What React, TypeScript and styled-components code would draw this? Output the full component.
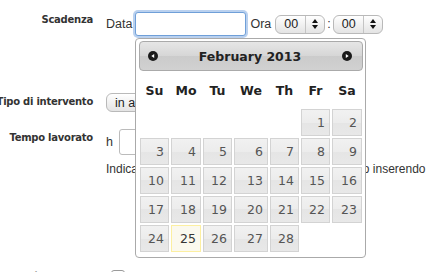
import React from "react"
import styled, { createGlobalStyle } from "styled-components"

const GlobalStyle = createGlobalStyle`
    html, body {
        margin: 0;
        padding: 0;
        background: #fff;
        overflow: hidden;
    }
    body {
        font-family: "Liberation Sans", Arial, sans-serif;
        font-size: 12.5px;
        color: #333;
    }
`

const Page = styled.div`
    position: relative;
    width: 432px;
    height: 272px;
    overflow: hidden;
`

const Form = styled.div`
    display: flex;
    flex-direction: column;
    padding-top: 12px;
`

const Row = styled.div`
    display: grid;
    grid-template-columns: 93px 1fr;
    column-gap: 13px;
    margin-top: ${(props: { $gap: number }) => props.$gap}px;
`

const Label = styled.div`
    display: flex;
    justify-content: flex-end;
    white-space: nowrap;
    font-family: "DejaVu Sans", Verdana, sans-serif;
    font-weight: bold;
    font-size: 10px;
    letter-spacing: -0.25px;
    color: #333;
    padding-top: ${(props: { $top: number }) => props.$top}px;
`

const Field = styled.div`
    display: flex;
    align-items: center;
    gap: 4px;
    white-space: nowrap;
`

const Stack = styled.div`
    display: flex;
    flex-direction: column;
    gap: 7px;
`

const DateInput = styled.div`
    width: 111px;
    height: 24px;
    box-sizing: border-box;
    border: 1px solid #6f9fd8;
    border-radius: 3px;
    background: #fff;
    box-shadow: 0 0 0 2px rgba(130, 172, 226, 0.55);
    margin-left: -1px;
`

const Spinner = styled.div`
    display: flex;
    align-items: center;
    width: ${(props: { $width: number }) => props.$width}px;
    height: 19px;
    box-sizing: border-box;
    border: 1px solid #b9b9b9;
    border-radius: 6px;
    background: linear-gradient(#ffffff, #f1f1f1 50%, #e4e4e4);
    color: #222;
    font-size: 12.5px;
`

const SpinnerValue = styled.span`
    flex: 1;
    padding-left: 8px;
`

const SpinnerArrows = styled.span`
    display: flex;
    align-items: center;
    justify-content: center;
    width: 18px;
    height: 100%;
    border-left: 1px solid #c4c4c4;
`

const Colon = styled.span`
    margin: 0 -2px;
`

const SmallInput = styled.div`
    width: 60px;
    height: 26px;
    box-sizing: border-box;
    border: 1px solid #bbb;
    border-radius: 3px;
    background: #fff;
    margin-left: 2px;
`

const Hint = styled.div`
    font-size: 12px;
    white-space: nowrap;
`

const Checkbox = styled.div`
    width: 14px;
    height: 14px;
    box-sizing: border-box;
    border: 1px solid #9a9a9a;
    border-radius: 3px;
    background: linear-gradient(#fff, #ededed);
    margin-left: 5px;
    margin-top: 1px;
`

const Picker = styled.div`
    position: absolute;
    left: 135px;
    top: 38px;
    width: 231px;
    height: 220px;
    box-sizing: border-box;
    padding: 2px 2px 5px 3px;
    border: 1px solid #aaa;
    border-radius: 4px;
    background: #fff;
    z-index: 10;
    font-family: "DejaVu Sans", Verdana, sans-serif;
`

const PickerHeader = styled.div`
    display: flex;
    align-items: center;
    justify-content: space-between;
    height: 30px;
    box-sizing: border-box;
    padding: 0 10px 0 8px;
    border: 1px solid #aaa;
    border-radius: 4px;
    background: linear-gradient(#e6e6e6, #d6d6d6 50%, #cbcbcb 50%, #d1d1d1);
`

const Title = styled.div`
    font-weight: bold;
    font-size: 12.5px;
    color: #222;
`

const NavIcon = styled.svg`
    width: 10px;
    height: 10px;
    display: block;
`

const DayGrid = styled.div`
    display: grid;
    grid-template-columns: 29px 30px 29px 34px 29px 29px 30px;
    column-gap: 2px;
    row-gap: 2px;
    margin-left: 1px;
`

const DayNames = styled(DayGrid)`
    height: 38px;
    align-items: center;
`

const DayName = styled.div`
    text-align: center;
    font-weight: bold;
    font-size: 12.5px;
    color: #222;
`

const Days = styled(DayGrid)`
    grid-auto-rows: 27px;
`

const Day = styled.div`
    display: flex;
    align-items: center;
    justify-content: flex-end;
    padding-right: 4px;
    box-sizing: border-box;
    font-size: 12.5px;
    border: 1px solid ${(props: { $today?: boolean }) => (props.$today ? "#fcefa1" : "#d3d3d3")};
    background: ${(props: { $today?: boolean }) =>
        props.$today ? "#fbf9ee" : "linear-gradient(#f1f1f1, #ececec 50%, #e5e5e5 50%, #e8e8e8)"};
    color: ${(props: { $today?: boolean }) => (props.$today ? "#363636" : "#555")};
`

const Blank = styled.div``

function UpDown() {
    return (
        <svg width="6" height="10" viewBox="0 0 6 10">
            <path d="M3 0 L6 4 L0 4 Z M0 6 L6 6 L3 10 Z" fill="#111" />
        </svg>
    )
}

function Nav(props: { dir: "prev" | "next" }) {
    return (
        <NavIcon viewBox="0 0 10 10">
            <circle cx="5" cy="5" r="5" fill="#1a1a1a" />
            {props.dir === "prev" ? (
                <path d="M3.3 5 L6.2 2.9 L6.2 7.1 Z" fill="#fff" />
            ) : (
                <path d="M6.7 5 L3.8 2.9 L3.8 7.1 Z" fill="#fff" />
            )}
        </NavIcon>
    )
}

const dayNames = ["Su", "Mo", "Tu", "We", "Th", "Fr", "Sa"]

export default function App() {
    const cells: React.ReactNode[] = []
    for (let i = 0; i < 5; i++) cells.push(<Blank key={"b" + i} />)
    for (let d = 1; d <= 28; d++) {
        cells.push(
            <Day key={d} $today={d === 25}>
                {d}
            </Day>
        )
    }

    return (
        <Page>
            <GlobalStyle />
            <Form>
                <Row $gap={0}>
                    <Label $top={2}>Scadenza</Label>
                    <Field>
                        <span>Data</span>
                        <DateInput />
                        <span>Ora</span>
                        <Spinner $width={50}>
                            <SpinnerValue>00</SpinnerValue>
                            <SpinnerArrows><UpDown /></SpinnerArrows>
                        </Spinner>
                        <Colon>:</Colon>
                        <Spinner $width={50}>
                            <SpinnerValue>00</SpinnerValue>
                            <SpinnerArrows><UpDown /></SpinnerArrows>
                        </Spinner>
                    </Field>
                </Row>
                <Row $gap={57}>
                    <Label $top={3}>Tipo di intervento</Label>
                    <Field>
                        <Spinner $width={110}>
                            <SpinnerValue>in azienda</SpinnerValue>
                        </Spinner>
                    </Field>
                </Row>
                <Row $gap={17}>
                    <Label $top={3}>Tempo lavorato</Label>
                    <Stack>
                        <Field>
                            <span>h</span>
                            <SmallInput />
                        </Field>
                        <Hint>Indica il tempo lavorato in ore e minuti anche solo inserendo</Hint>
                    </Stack>
                </Row>
                <Row $gap={93}>
                    <Label $top={2}>Visibilità al cliente</Label>
                    <Field>
                        <Checkbox />
                    </Field>
                </Row>
            </Form>
            <Picker>
                <PickerHeader>
                    <Nav dir="prev" />
                    <Title>February 2013</Title>
                    <Nav dir="next" />
                </PickerHeader>
                <DayNames>
                    {dayNames.map((n) => (
                        <DayName key={n}>{n}</DayName>
                    ))}
                </DayNames>
                <Days>{cells}</Days>
            </Picker>
        </Page>
    )
}
